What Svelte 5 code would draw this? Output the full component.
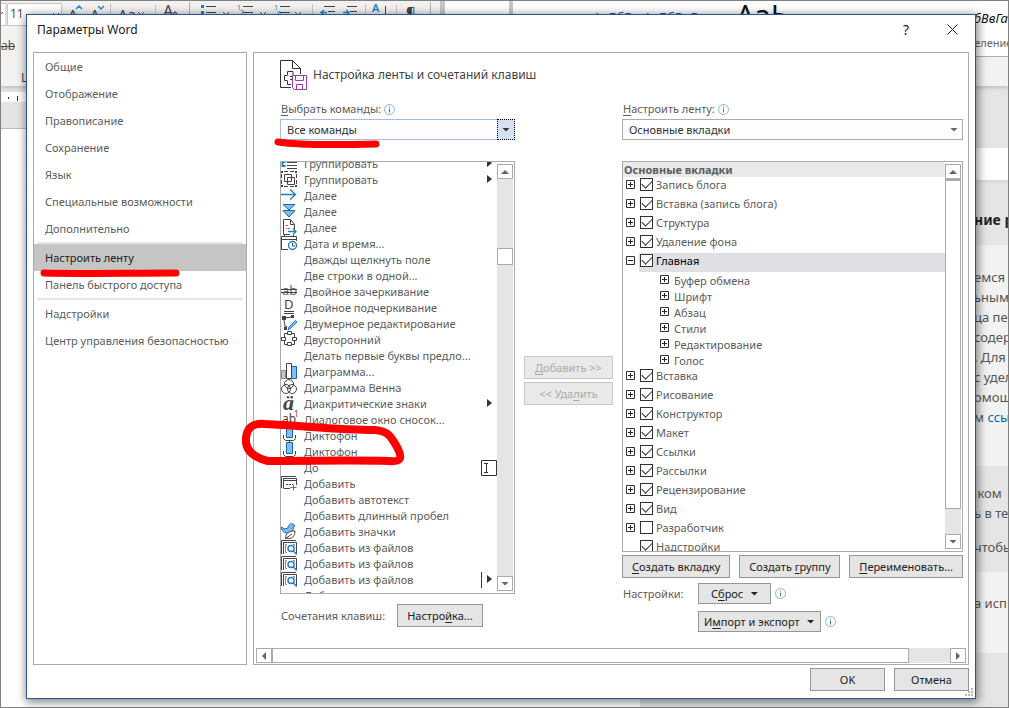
<script>
    const sections = [
        ['Общие', 'Отображение', 'Правописание', 'Сохранение', 'Язык', 'Специальные возможности', 'Дополнительно'],
        ['Настроить ленту', 'Панель быстрого доступа'],
        ['Надстройки', 'Центр управления безопасностью']
    ];

    const dark = '#444444';
    const blue = '#1e7fc8';
    const light = '#83bdf0';

    // each icon is a list of shapes on a 16x16 grid
    const mic = [
        {d: 'M2.5 8v3.5l2 2h8l2-2V8M8.5 13.5v2', stroke: dark},
        {d: 'M5.5 -.5h6v11h-6z', stroke: '#1268b3', fill: light}
    ];
    const search = [
        {d: 'M.5 15V1.5H15', stroke: dark},
        {d: 'M2.5 15V3.5h13V15', stroke: dark},
        {d: 'M6 13.5H4.5v-8H6M12 5.5h1.5V7', stroke: '#888888'},
        {d: 'M13 9.5a3 3 0 1 1-6 0a3 3 0 1 1 6 0M12.300 12l3.500 3.500', stroke: blue, width: 1.5, fill: '#ffffff'}
    ];
    const icons = {
        list: [
            {d: 'M1.500 7v4h3M1.500 7h3', stroke: blue, width: 2},
            {d: 'M6 7.500h10M6 10.500h10M6 13.500h10', stroke: dark}
        ],
        group: [
            {d: 'M3 .5h4M9 .5h4M.5 3v4M.5 9v4M15.500 3v4M15.500 9v4M3 15.500h4M9 15.500h4', stroke: dark},
            {d: 'M3.500 3.500h7v7h-7zM6.500 6.500h7v7h-7z', stroke: dark},
            {d: 'M0 0h2v2H0zM14 0h2v2h-2zM0 14h2v2H0zM14 14h2v2h-2z', fill: dark}
        ],
        arrow: [{d: 'M0 7.500h14.500M9 2.500l5.500 5L9 12.500', stroke: blue, width: 1.4}],
        down: [
            {d: 'M2 1.500h12L8 7z', stroke: '#1268b3', fill: light},
            {d: 'M2 7.500h12L8 14z', stroke: '#1268b3', fill: light}
        ],
        next: [
            {d: 'M13.500 10V5.500l-4-5h-7v15H9M9.500.5v5h4', stroke: dark},
            {d: 'M5 6.500h2M9 9.500H7M5 9.500h1', stroke: '#e03c3c'},
            {d: 'M7 12.500h8M12 9.500l3 3-3 3', stroke: blue, width: 1.3}
        ],
        date: [
            {d: 'M.5 14.500V1.500h15V6M.5 4.500h15M.5 14.500H7M3.500 0v2M12.500 0v2', stroke: dark},
            {d: 'M15.500 10.500a4 4 0 1 1-8 0a4 4 0 1 1 8 0', stroke: blue, fill: '#ffffff', width: 1.400},
            {d: 'M11.500 8v3H14', stroke: dark}
        ],
        strike: [{text: 'ab', size: 13, x: 1, y: 12, color: '#666666'}, {d: 'M0 6.500h16M0 9.500h16', stroke: dark}],
        underline: [{text: 'D', size: 13, x: 3, y: 10}, {d: 'M3 12.500h10M3 14.500h10', stroke: dark}],
        edit: [
            {d: 'M3 3L11.500 2M2.500 3l2 10M4.500 13L6 11', stroke: dark},
            {d: 'M1 1h4v4H1zM10 0h3v3h-3zM3 12h3v3H3z', fill: dark},
            {d: 'M7 15l1-3 6.500-6.500 1.500 1.500-6.500 6.500z', stroke: blue, fill: light}
        ],
        cycle: [
            {d: 'M6.500.5h4v3h-4zM.5 6.500h4v3h-4zM11.500 6.500h4v3h-4zM6.500 11.500h4v3h-4z', stroke: dark},
            {d: 'M6 2.500H3.500V6M11 2.500h2.500V6M6 13.500H3.500V10M11 13.500h2.500V10', stroke: dark}
        ],
        chart: [
            {d: 'M.5 7.500h4v8h-4z', stroke: '#888888', fill: '#c8c8c8'},
            {d: 'M10.500 3.500h5v12h-5z', stroke: '#1268b3', fill: light},
            {d: 'M5.500.5h5v15h-5z', stroke: dark, fill: '#ffffff'}
        ],
        venn: [
            {d: 'M12.500 5a4.500 4.500 0 1 1-9 0a4.500 4.500 0 1 1 9 0', stroke: dark},
            {d: 'M9.500 10a4.500 4.500 0 1 1-9 0a4.500 4.500 0 1 1 9 0', stroke: dark},
            {d: 'M15.500 10a4.500 4.500 0 1 1-9 0a4.500 4.500 0 1 1 9 0', stroke: dark}
        ],
        accent: [{text: 'ä', size: 22, x: 2, y: 15, italic: true}],
        footnote: [{text: 'ab', size: 12, x: 1, y: 12}, {text: '1', size: 8, x: 13, y: 6, color: '#d02020'}],
        mic,
        add: [
            {d: 'M.5 13V1.500H15M2.500 13V3.500h13V10M2.500 5.500h13M2.500 13.500H9', stroke: dark},
            {d: 'M5 9.500h7', stroke: dark, dash: '2 1'},
            {d: 'M12.500 9.500v6M9.500 12.500h6', stroke: '#2f9e44'}
        ],
        bird: [
            {d: 'M0 4l4 2 3-1c0-3 3-5 5-4l2 2-2 1c1 4-2 6-5 6S1 9 0 4z', stroke: '#1268b3', fill: light},
            {d: 'M5 15c-1-4 2-7 9-7 0 5-3 9-9 7zM4 16l7-5', stroke: dark, fill: '#ffffff'}
        ],
        search
    };

    const commands = [
        {name: 'Группировать', icon: 'list', more: true},
        {name: 'Группировать', icon: 'group', more: true},
        {name: 'Далее', icon: 'arrow'},
        {name: 'Далее', icon: 'down'},
        {name: 'Далее', icon: 'next'},
        {name: 'Дата и время...', icon: 'date'},
        {name: 'Дважды щелкнуть поле'},
        {name: 'Две строки в одной...'},
        {name: 'Двойное зачеркивание', icon: 'strike'},
        {name: 'Двойное подчеркивание', icon: 'underline'},
        {name: 'Двумерное редактирование', icon: 'edit'},
        {name: 'Двусторонний', icon: 'cycle'},
        {name: 'Делать первые буквы предло...'},
        {name: 'Диаграмма...', icon: 'chart'},
        {name: 'Диаграмма Венна', icon: 'venn'},
        {name: 'Диакритические знаки', icon: 'accent', more: true},
        {name: 'Диалоговое окно сносок...', icon: 'footnote'},
        {name: 'Диктофон', icon: 'mic'},
        {name: 'Диктофон', icon: 'mic'},
        {name: 'До', field: true},
        {name: 'Добавить', icon: 'add'},
        {name: 'Добавить автотекст'},
        {name: 'Добавить длинный пробел'},
        {name: 'Добавить значки', icon: 'bird'},
        {name: 'Добавить из файлов', icon: 'search'},
        {name: 'Добавить из файлов', icon: 'search'},
        {name: 'Добавить из файлов', icon: 'search', more: true, split: true},
        {name: 'Добав'}
    ];

    let tabs = $state([
        {name: 'Запись блога', on: true},
        {name: 'Вставка (запись блога)', on: true},
        {name: 'Структура', on: true},
        {name: 'Удаление фона', on: true},
        {name: 'Главная', on: true, open: true, groups: ['Буфер обмена', 'Шрифт', 'Абзац', 'Стили', 'Редактирование', 'Голос']},
        {name: 'Вставка', on: true},
        {name: 'Рисование', on: true},
        {name: 'Конструктор', on: true},
        {name: 'Макет', on: true},
        {name: 'Ссылки', on: true},
        {name: 'Рассылки', on: true},
        {name: 'Рецензирование', on: true},
        {name: 'Вид', on: true},
        {name: 'Разработчик', on: false},
        {name: 'Надстройки', on: true, leaf: true}
    ]);

    let current = $state('Настроить ленту');
</script>

{#snippet glyph(shapes)}
    <svg class="glyph" viewBox="0 0 16 16" aria-hidden="true">
        {#each shapes as s}
            {#if s.text}
                <text x={s.x} y={s.y} font-size={s.size} fill={s.color ?? dark} class:serif={s.italic}>{s.text}</text>
            {:else}
                <path d={s.d} fill={s.fill ?? 'none'} stroke={s.stroke ?? 'none'} stroke-width={s.width ?? 1} stroke-dasharray={s.dash}/>
            {/if}
        {/each}
    </svg>
{/snippet}

{#snippet info()}
    <svg class="info" viewBox="0 0 11 11" aria-hidden="true">
        <circle cx="5.5" cy="5.5" r="5" fill="#fff" stroke="#8eb4dc"/>
        <path d="M5.500 2.500v1M5.500 4.500v4" stroke="#3f74b5" fill="none"/>
    </svg>
{/snippet}

{#snippet expander(open)}
    <button class="expander" aria-label={open ? 'Свернуть' : 'Развернуть'}>
        <svg viewBox="0 0 9 9"><path d={open ? 'M2 4.500h5' : 'M2 4.500h5M4.500 2v5'} stroke="#222"/><path d="M.5.500h8v8h-8z" fill="none" stroke="#333"/></svg>
    </button>
{/snippet}

<main>
    <div class="word">
        <header class="ribbon">
            <svg class="tools" aria-hidden="true">
                <path d="M443 0h566v55H443z" fill="#fff"/>
                <path d="M439 0h5v16h-5zM508 0h4v16h-4z" fill="#c6c6c6"/>
                <path d="M-1 2.500h6v22h-6zM6.500 2.500h54v22h-54z" fill="#fff" stroke="#c6c6c6"/>
                <path d="M109.500 3v12M154.500 3v12M311.500 3v12M364.500 3v12M395.500 3v12" stroke="#c8c8c8"/>
                <path d="M188.500 1v14M429.500 1v14M975 55.500h33" stroke="#b0b0b0"/>
                <path d="M205 5.500h10M205 11.500h10M242 5.500h10M242 11.500h10M279 5.500h10M279 11.500h10M323 5.500h11M327 10.500h7M346 5.500h10M349 10.500h7M384.500 5v10" stroke="#444"/>
                <path d="M52 12l3 3 3-3M222 11l3 3 3-3M259 11l3 3 3-3M294 11l3 3 3-3M137 11l3 3 3-3M0 13l2-2" stroke="#555" fill="none"/>
                <path d="M200 4h3v3h-3zM200 10h3v3h-3z" fill="#1e7fc8"/>
                <path d="M75 8l3-3 3 3M97 5l3 3 3-3M320 11.500h6M323 9l-3 2.500 3 2.500M342 11.500h6M345 9l3 2.500-3 2.500" fill="none" stroke="#1e8fd0" stroke-width="1.500"/>
                <path d="M171 14l3-3 4 4" fill="none" stroke="#a338ab" stroke-width="1.500"/>
                <text x="9" y="17" font-size="12" fill="#555">11</text>
                <text x="0" y="49" font-size="12" fill="#555">ab</text>
                <path d="M0 45.500h14" stroke="#444"/>
                <text x="20" y="81" font-size="12" fill="#444">Шрифт</text>
                <text x="67" y="19" font-size="15" fill="#444">A</text>
                <text x="89" y="19" font-size="15" fill="#444">A</text>
                <text x="117" y="19" font-size="15" fill="#444">Aa</text>
                <text x="162" y="16" font-size="16" fill="#444">A</text>
                <text x="236" y="9" font-size="7" fill="#1e7fc8">1</text>
                <text x="239" y="14" font-size="7" fill="#1e7fc8">2</text>
                <text x="273" y="9" font-size="7" fill="#1e7fc8">1</text>
                <text x="276" y="14" font-size="7" fill="#1e7fc8">a</text>
                <text x="371" y="11" font-size="11" font-weight="600" fill="#1e7fc8">А</text>
                <text x="405" y="17" font-size="15" fill="#444">¶</text>
                <text x="592" y="21" font-size="13" fill="#2b4f9e">АаБбВв АаБбВвГ</text>
                <text x="735" y="25" font-size="29" fill="#111">АаЬ</text>
                <text x="951" y="22" font-size="13" font-style="italic" fill="#111">АаБбВвГа</text>
                <text x="951" y="46" font-size="11" fill="#666">Выделение</text>
            </svg>
        </header>
        <div class="workspace">
            <div class="page">
                <svg class="ruler" aria-hidden="true">
                    <path d="M0 6h26v10H0z" fill="#fff"/>
                    <path d="M7.500 11v2M16.500 10v5" stroke="#333"/>
                </svg>
            </div>
            <article class="help">
                <h2>ние р</h2>
                <p class="first">емся<br>ьным<br>ца пе<br>содер<br>. Для<br>с удел<br>омощ<br>м <a href="#help">ссы</a></p>
                <p class="second">&nbsp;ком<br>ь в те</p>
                <p class="third">чтобы</p>
                <p class="fourth">а исп</p>
                <p class="last"></p>
            </article>
        </div>
    </div>

    <section class="dialog" role="dialog" aria-labelledby="title">
        <div class="titlebar">
            <h1 id="title">Параметры Word</h1>
            <button class="plain" aria-label="Справка">?</button>
            <button class="plain" aria-label="Закрыть">
                <svg class="close" viewBox="0 0 11 11"><path d="M.5.500l10 10M10.500.500l-10 10" stroke="#222"/></svg>
            </button>
        </div>

        <div class="body">
            <nav>
                {#each sections as items, i}
                    {#if i > 0}<hr>{/if}
                    {#each items as item}
                        <button class="item" class:active={item === current} onclick={() => current = item}>{item}</button>
                    {/each}
                {/each}
            </nav>

            <div class="panel">
                <div class="heading">
                    <svg class="logo" viewBox="0 0 28 30" aria-hidden="true">
                        <path d="M11 27.500H.5V.5h12l8 8V14M12.500.5v8h8" fill="none" stroke="#333"/>
                        <path d="M13 15.500V11.500H7.500v4M7 15.500H4.500v5H7M10 16.500h3M10 19.500h2M7.500 20.500v4H11" fill="none" stroke="#333"/>
                        <path d="M12.500 15.500h14v14h-12l-2-2zM15.500 15.500v5h8v-5M16.500 29.500v-5h6v5" fill="#fff" stroke="#a338ab"/>
                    </svg>
                    <h2>Настройка ленты и сочетаний клавиш</h2>
                </div>

                <div class="columns">
                    <div class="column commands">
                        <div class="label"><label for="source"><u>В</u>ыбрать команды:</label>{@render info()}</div>
                        <div class="select focused">
                            <select id="source"><option>Все команды</option></select>
                            <span class="drop"><i class="caret"></i></span>
                        </div>
                        <div class="box">
                            <ul class="rows">
                                {#each commands as command}
                                    <li>
                                        <span class="slot">{#if command.icon}{@render glyph(icons[command.icon])}{/if}</span>
                                        <span class="name">{command.name}</span>
                                        {#if command.field}
                                            <svg class="field" viewBox="0 0 16 16"><path d="M.5.500h15v15H.500zM3 3.500h4M3 12.500h4M5.500 3v10" fill="none" stroke="#333"/></svg>
                                        {/if}
                                        {#if command.more}<i class="more" class:split={command.split}></i>{/if}
                                    </li>
                                {/each}
                            </ul>
                            <div class="scrollbar">
                                <button class="step" aria-label="Вверх"><i class="caret up"></i></button>
                                <div class="track"><div class="thumb small"></div></div>
                                <button class="step" aria-label="Вниз"><i class="caret"></i></button>
                            </div>
                        </div>
                        <div class="shortcuts">
                            <span>Сочетания клавиш:</span>
                            <button class="button">Настро<u>й</u>ка...</button>
                        </div>
                    </div>

                    <div class="transfer">
                        <button class="button" disabled><u>Д</u>обавить &gt;&gt;</button>
                        <button class="button" disabled>&lt;&lt; Уда<u>л</u>ить</button>
                    </div>

                    <div class="column">
                        <div class="label"><label for="target"><u>Н</u>астроить ленту:</label>{@render info()}</div>
                        <div class="select">
                            <select id="target"><option>Основные вкладки</option></select>
                            <span class="drop"><i class="caret"></i></span>
                        </div>
                        <div class="box">
                            <div class="tree">
                                <h3>Основные вкладки</h3>
                                {#each tabs as tab, i}
                                    <div class="tab">
                                        {#if tab.leaf}<span class="blank"></span>{:else}{@render expander(tab.open)}{/if}
                                        <div class="tabname" class:chosen={tab.open}>
                                            <input type="checkbox" id="tab{i}" bind:checked={tab.on}>
                                            <label for="tab{i}">{tab.name}</label>
                                        </div>
                                    </div>
                                    {#if tab.groups}
                                        {#each tab.groups as group}
                                            <div class="group">{@render expander(false)}<span>{group}</span></div>
                                        {/each}
                                    {/if}
                                {/each}
                            </div>
                            <div class="scrollbar">
                                <button class="step" aria-label="Вверх"><i class="caret up"></i></button>
                                <div class="track"><div class="thumb large"></div></div>
                                <button class="step" aria-label="Вниз"><i class="caret"></i></button>
                            </div>
                        </div>
                        <div class="actions">
                            <button class="button"><u>С</u>оздать вкладку</button>
                            <button class="button">Создать <u>г</u>руппу</button>
                            <button class="button"><u>П</u>ереименовать...</button>
                        </div>
                        <div class="settings">
                            <span>Настройки:</span>
                            <div class="line"><button class="button reset"><span>С<u>б</u>рос</span><i class="caret"></i></button>{@render info()}</div>
                            <div class="line second"><button class="button"><span>И<u>м</u>порт и экспорт</span><i class="caret"></i></button>{@render info()}</div>
                        </div>
                    </div>
                </div>

                <div class="scrollbar horizontal">
                    <button class="step" aria-label="Влево"><i class="caret left"></i></button>
                    <div class="track"><div class="thumb wide"></div></div>
                    <button class="step" aria-label="Вправо"><i class="caret right"></i></button>
                </div>
            </div>
        </div>

        <footer>
            <button class="button">OK</button>
            <button class="button">Отмена</button>
        </footer>
        <svg class="grip" viewBox="0 0 8 8" aria-hidden="true">
            <path d="M6 0h2v2H6zM3 3h2v2H3zM6 3h2v2H6zM0 6h2v2H0zM3 6h2v2H3zM6 6h2v2H6z" fill="#b8b8b8"/>
        </svg>
    </section>

    <!-- marker strokes -->
    <svg class="marks" aria-hidden="true">
        <path d="M44 273c30 1 80 0 132 0M278 142c20 3 60 3 98 2"/>
        <path class="loop" d="M268 461C252 457 245 449 246 438C247 427 253 423 265 424C305 426 340 430 375 430C389 431 392 438 398 449C403 459 400 462 389 461C350 460 310 461 268 461Z"/>
    </svg>
</main>

<style>
    :global(body) {
        font-family: "Noto Sans", "Open Sans", sans-serif;
        font-size: 11px;
        line-height: 16px;
        color: #5c5c5c;
    }

    main {
        position: relative;
        min-height: 100vh;
        overflow: hidden;
    }

    * {
        box-sizing: border-box;
    }

    button, select {
        font: inherit;
        color: inherit;
    }

    h1, h2, h3, p, ul {
        margin: 0;
        padding: 0;
        font-size: inherit;
        font-weight: 400;
    }

    svg {
        flex: none;
        display: block;
    }

    .word {
        position: absolute;
        inset: 0;
        display: flex;
        flex-direction: column;
        border: 1px solid #808080;
        overflow: hidden;
        isolation: isolate;
    }

    .ribbon {
        height: 85px;
        flex: none;
        background: #f3f2f1;
        box-shadow: 0 1px 5px #b0b0b0;
        z-index: 1;
    }

    .tools {
        width: 100%;
        height: 85px;
    }

    .workspace {
        flex: 1;
        display: flex;
        min-height: 0;
        background: #e5e5e5;
    }

    .page {
        flex: 640;
        background: linear-gradient(#e5e5e5 42px, #bbbbbb 42px, #bbbbbb 43px, #ffffff 43px);
    }

    .ruler {
        width: 26px;
        height: 42px;
    }

    .help {
        flex: 368;
        display: flex;
        flex-direction: column;
        font-size: 13px;
        line-height: 20px;
        white-space: nowrap;
        color: #555555;
        background: linear-gradient(#e5e5e5 62px, #ffffff 62px, #ffffff 94px, #d4d4d4 94px, #e5e5e5 98px);
    }

    .help h2, .help p {
        padding-left: calc(100% - 34px);
    }

    .help h2 {
        padding-top: 124px;
        padding-bottom: 15px;
        font-size: 14px;
        font-weight: 700;
        color: #222222;
    }

    .help a {
        color: #0067b8;
        text-decoration: none;
    }

    .first {
        height: 221px;
        background: #f2f2f2;
    }

    .help .first {
        padding-top: 22px;
    }

    .help .second {
        padding-top: 17px;
    }

    .help .third {
        padding-top: 14px;
        padding-bottom: 15px;
    }

    .help .fourth {
        padding-top: 21px;
        height: 81px;
        background: #f2f2f2;
    }

    .dialog {
        position: absolute;
        inset: 14px 33px 9px 26px;
        display: flex;
        flex-direction: column;
        background: #ffffff;
        border: 1px solid #2b579a;
        box-shadow: 1px 2px 9px 1px rgba(0, 0, 0, 0.5);
    }

    .titlebar {
        display: flex;
        align-items: center;
        height: 37px;
        padding: 0 12px 8px 10px;
        color: #222222;
    }

    .titlebar h1 {
        flex: 1;
        font-size: 12px;
    }

    .plain {
        width: 22px;
        padding: 0;
        border: none;
        background: none;
        font-size: 14px;
        display: flex;
        justify-content: center;
    }

    .plain + .plain {
        margin-left: 24px;
    }

    .close {
        width: 11px;
        height: 11px;
    }

    .body {
        flex: 1;
        display: flex;
        gap: 6px;
        padding: 0 6px;
        min-height: 0;
    }

    nav {
        width: 214px;
        border: 1px solid #ababab;
    }

    nav hr {
        height: 2px;
        margin: 0 3px;
        border: none;
        background: #e5e5e5;
    }

    .item {
        display: block;
        width: 100%;
        height: 27px;
        padding: 0 11px;
        border: none;
        background: none;
        text-align: left;
        white-space: nowrap;
    }

    .item.active {
        background: #c5c5c5;
        color: #222222;
    }

    .panel {
        flex: 1;
        display: flex;
        flex-direction: column;
        border: 1px solid #ababab;
        min-width: 0;
    }

    .heading {
        display: flex;
        align-items: center;
        gap: 5px;
        padding: 7px 26px 11px;
        color: #444444;
    }

    .heading h2 {
        font-size: 12px;
    }

    .logo {
        width: 28px;
        height: 30px;
    }

    .columns {
        flex: 1;
        display: grid;
        grid-template-columns: 235fr 89px 341fr;
        gap: 9px;
        padding: 0 5px 16px 26px;
        min-height: 0;
    }

    .column {
        display: flex;
        flex-direction: column;
        min-height: 0;
        min-width: 0;
    }

    .commands {
        padding-bottom: 5px;
    }

    .label {
        display: flex;
        align-items: center;
        gap: 3px;
        padding: 0 1px;
        margin-bottom: 2px;
    }

    .info {
        width: 11px;
        height: 11px;
    }

    .select {
        position: relative;
        height: 21px;
        flex: none;
        margin-bottom: 21px;
    }

    select {
        appearance: none;
        width: 100%;
        height: 100%;
        padding: 0 20px 0 6px;
        border: 1px solid #ababab;
        border-radius: 0;
        background: #fdfdfd;
        color: #333333;
        outline: none;
    }

    .drop {
        position: absolute;
        inset: 0 0 0 auto;
        width: 18px;
        display: flex;
        align-items: center;
        justify-content: center;
        pointer-events: none;
        color: #666666;
    }

    .focused select {
        border-color: #a3bde3;
    }

    .focused .drop {
        background: #d5e1f2;
        border: 1px dotted #000000;
        color: #333333;
    }

    .caret {
        width: 8px;
        height: 4px;
        background: currentColor;
        clip-path: polygon(0 0, 100% 0, 50% 100%);
    }

    .up {
        transform: rotate(180deg);
    }

    .left {
        transform: rotate(90deg);
    }

    .right {
        transform: rotate(-90deg);
    }

    .box {
        flex: 1;
        display: flex;
        min-height: 0;
        border: 1px solid #ababab;
        overflow: hidden;
    }

    .rows {
        flex: 1;
        list-style: none;
        margin-top: -6px;
    }

    .rows li {
        display: flex;
        align-items: center;
        height: 16px;
        gap: 7px;
        white-space: nowrap;
    }

    .slot {
        width: 16px;
        height: 18px;
    }

    .name {
        flex: 1;
    }

    .glyph, .field {
        width: 16px;
        height: 16px;
        overflow: visible;
    }

    .serif {
        font-family: "Liberation Serif", serif;
        font-style: italic;
        font-weight: 700;
    }

    .more {
        width: 10px;
        height: 16px;
        background: #333333;
        clip-path: polygon(0 3px, 5px 7px, 0 11px);
    }

    .more.split {
        width: 16px;
        clip-path: polygon(0 0, 1px 0, 1px 7px, 6px 7px, 6px 3px, 11px 7px, 6px 11px, 6px 7px, 1px 7px, 1px 16px, 0 16px);
    }

    .scrollbar {
        flex: none;
        display: flex;
        flex-direction: column;
        width: 17px;
        padding: 2px 1px 2px 0;
    }

    .step {
        flex: none;
        display: flex;
        align-items: center;
        justify-content: center;
        width: 16px;
        height: 15px;
        padding: 0;
        border: 1px solid #ababab;
        background: #ffffff;
        color: #666666;
    }

    .track {
        flex: 1;
        background: #e5e5e5;
    }

    .thumb {
        border: 1px solid #ababab;
        background: #ffffff;
    }

    .small {
        height: 17px;
        margin-top: 69px;
    }

    .large {
        height: 93%;
        border-top-width: 2px;
    }

    .wide {
        width: 94%;
        height: 100%;
    }

    .scrollbar.horizontal {
        flex-direction: row;
        width: auto;
        height: 15px;
        padding: 0;
        margin: 0 2px 1px;
    }

    .button {
        height: 23px;
        padding: 0 8px;
        border: 1px solid #969696;
        background: #e5e5e5;
        color: #222222;
        white-space: nowrap;
    }

    .button:disabled {
        border-color: #c8c8c8;
        background: #e9e9e9;
        color: #ababab;
    }

    u {
        text-underline-offset: 2px;
    }

    .shortcuts {
        display: flex;
        align-items: center;
        gap: 12px;
        padding: 10px 1px 0;
    }

    .shortcuts .button {
        padding: 0 9px;
    }

    .transfer {
        display: flex;
        flex-direction: column;
        gap: 3px;
        padding-top: 255px;
    }

    .tree {
        flex: 1;
        overflow: hidden;
    }

    .tree h3 {
        height: 15px;
        padding-left: 1px;
        background: #e9e9e9;
        font-weight: 700;
    }

    .tab {
        display: flex;
        height: 19px;
        padding-left: 3px;
    }

    .expander {
        width: 9px;
        height: 9px;
        margin: 3px 4px 0 0;
        padding: 0;
        border: none;
        background: none;
    }

    .blank {
        width: 13px;
    }

    .tabname {
        flex: 1;
        display: flex;
        gap: 3px;
        padding: 0 1px;
    }

    .chosen {
        background: #e0dfe4;
        color: #000000;
    }

    input {
        appearance: none;
        flex: none;
        width: 13px;
        height: 13px;
        margin: 1px 0 0;
        border: 1px solid #333333;
        background: #ffffff;
    }

    input:checked::before {
        content: "";
        display: block;
        width: 9px;
        height: 5px;
        margin: 1px;
        border: solid #333333;
        border-width: 0 0 1px 1px;
        transform: rotate(-45deg);
    }

    .group {
        display: flex;
        gap: 1px;
        height: 16px;
        line-height: 18px;
        padding-left: 37px;
    }

    .actions {
        display: flex;
        justify-content: space-between;
        padding: 3px 0 5px;
    }

    .actions .button {
        padding: 0 9px;
    }

    .settings {
        display: grid;
        grid-template-columns: 75px 1fr;
        row-gap: 7px;
        align-items: center;
        padding-left: 1px;
    }

    .settings .button {
        display: flex;
        align-items: center;
        gap: 7px;
        height: 21px;
        padding: 0 5px;
    }

    .settings .reset {
        padding: 0 12px;
    }

    .line {
        display: flex;
        gap: 4px;
        align-items: center;
    }

    .second {
        grid-column: 2;
    }

    footer {
        display: flex;
        justify-content: flex-end;
        gap: 9px;
        padding: 3px 6px 7px;
    }

    footer .button {
        width: 75px;
    }

    .grip {
        position: absolute;
        right: 2px;
        bottom: 2px;
        width: 8px;
        height: 8px;
    }

    .marks {
        position: absolute;
        inset: 0;
        width: 100%;
        height: 100%;
        fill: none;
        stroke: #ff0000;
        stroke-width: 7px;
        stroke-linecap: round;
        pointer-events: none;
    }

    .loop {
        stroke-width: 8px;
    }
</style>
